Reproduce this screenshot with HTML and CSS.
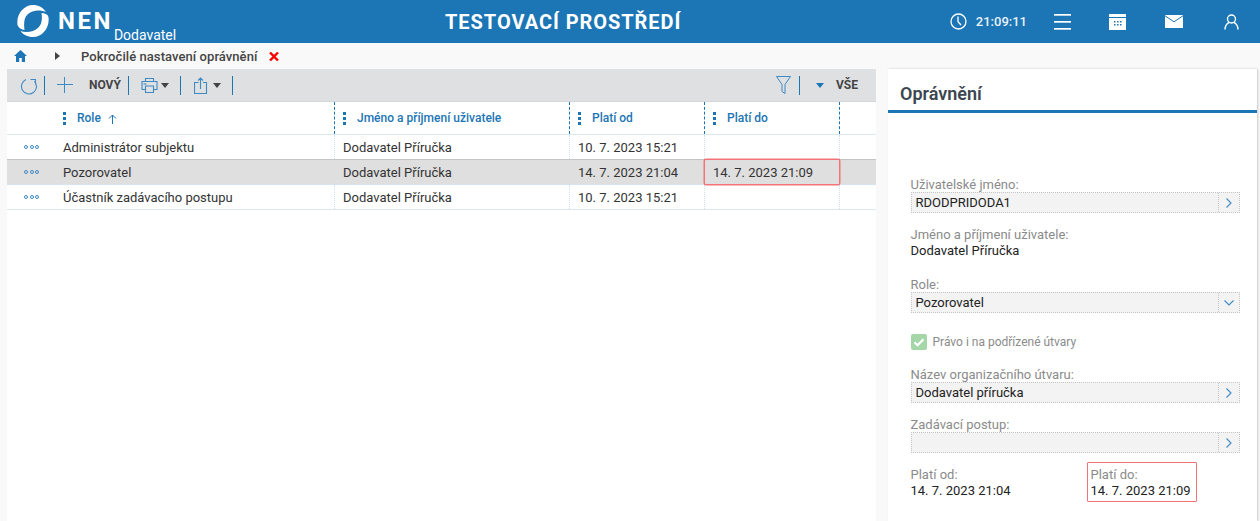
FILE: index.html
```html
<!DOCTYPE html>
<html lang="cs">
<head>
<meta charset="utf-8">
<title>NEN</title>
<link rel="stylesheet" href="styles.css">
</head>
<body>
<header class="topbar">
  <div class="brand">
    <svg class="logo" width="32" height="32" viewBox="0 0 32 32" fill="#fff"><path d="M.5 20C-1 9 7 0 16 0C21.500 0 26 2.500 29 7C23 4.500 15 5 10.500 9.500C7.500 12.500 6.500 17 7.500 25C4.500 24.500 1.500 23 .5 20Z"/><path d="M31.500 12C33 23 25 32 16 32C10.500 32 6 29.500 3.500 26C9 28 17 27 21.500 22.500C24.500 19.500 25.500 15 24.500 8C27.500 8 30.500 9 31.500 12Z"/></svg>
    <span class="nen">NEN</span>
    <span class="dod">Dodavatel</span>
  </div>
  <div class="envname">TESTOVACÍ PROSTŘEDÍ</div>
  <div class="tools">
    <svg class="clock" width="17" height="17" viewBox="0 0 17 17" fill="none" stroke="#fff" stroke-width="1.300"><circle cx="8.500" cy="8.500" r="7.500"/><path d="M8 3.500v5.200l3 3.300"/></svg>
    <span class="time">21:09:11</span>
    <svg class="t-menu" width="17" height="16" viewBox="0 0 17 16" fill="#fff"><rect y="0" width="17" height="1.700"/><rect y="7" width="17" height="1.700"/><rect y="14" width="17" height="1.700"/></svg>
    <svg class="t-cal" width="17" height="16" viewBox="0 0 17 16"><rect width="17" height="16" fill="#fff"/><rect y="3" width="17" height="1" fill="#1c75b5"/><g fill="#1c75b5"><rect x="5" y="7" width="1.500" height="1.500"/><rect x="8" y="7" width="1.500" height="1.500"/><rect x="11" y="7" width="1.500" height="1.500"/><rect x="5" y="10" width="1.500" height="1.500"/><rect x="8" y="10" width="1.500" height="1.500"/><rect x="11" y="10" width="1.500" height="1.500"/></g></svg>
    <svg class="t-mail" width="18" height="13" viewBox="0 0 18 13"><rect width="18" height="13" fill="#fff"/><path d="M0 .8l9 6 9-6" fill="none" stroke="#1c75b5" stroke-width="1"/></svg>
    <svg class="t-user" width="15" height="16" viewBox="0 0 15 16" fill="none" stroke="#fff" stroke-width="1.400"><circle cx="7.500" cy="5" r="4"/><path d="M1 15.500c0-4 2.500-6.500 4-7M14 15.500c0-4-2.500-6.500-4-7"/></svg>
  </div>
</header>
<nav class="crumbs">
  <svg class="home" width="13" height="12" viewBox="0 0 13 12" fill="#1c75b5"><path d="M6.500 0L0 6h2v6h3.200V8h2.600v4H11V6h2z"/></svg>
  <svg class="arrow" width="5" height="8" viewBox="0 0 5 8" fill="#444"><path d="M0 0l5 4-5 4z"/></svg>
  <span class="crumb">Pokročilé nastavení oprávnění</span>
  <svg class="close" width="10" height="9" viewBox="0 0 10 9" stroke="#f00" stroke-width="2.400"><path d="M1 .5l8 8M9 .5l-8 8"/></svg>
</nav>
<main class="content">
  <section class="list">
    <div class="toolbar">
      <svg class="ico-refresh" width="18" height="19" viewBox="0 0 18 19" fill="none" stroke="#3d8ac4" stroke-width="1.100"><path d="M6 3.600A7.500 7.500 0 1 0 14.500 5.400"/><path d="M10.500 3.500H15.500V8.500"/></svg>
      <i class="sep"></i>
      <svg class="ico-plus" width="16" height="16" viewBox="0 0 16 16" stroke="#3d8ac4" stroke-width="1"><path d="M7.500 0v16M0 7.500h16"/></svg>
      <span class="novy">NOVÝ</span>
      <i class="sep sep-n"></i>
      <svg class="ico-print" width="17" height="17" viewBox="0 0 17 17" fill="none" stroke="#3d8ac4" stroke-width="1.100"><path d="M4.500 4.500V1.500h8V4.500M4.500 12.500H1V4.500h15v8h-3.500"/><path d="M4.500 9h8v6.500h-8z"/><path d="M2.500 7h3"/></svg>
      <i class="caret"></i>
      <i class="sep sep-c"></i>
      <svg class="ico-share" width="14" height="17" viewBox="0 0 14 17" fill="none" stroke="#3d8ac4" stroke-width="1.100"><path d="M4.500 5.500H.5v11h12v-11H9M6.500 12V1M4 3.500L6.500 1 9 3.500"/></svg>
      <i class="caret caret-s"></i>
      <i class="sep sep-c"></i>
      <span class="spacer"></span>
      <svg class="ico-filter" width="15" height="18" viewBox="0 0 15 18" fill="none" stroke="#3d8ac4"><path d="M.5.500h14L9 8.500v9l-3-2v-7z"/></svg>
      <i class="sep sep-f"></i>
      <i class="caret caret-blue"></i>
      <span class="vse">VŠE</span>
    </div>
    <div class="grid head">
      <div class="hc c1"><i class="dots"></i><span>Role</span><svg class="up" width="9" height="10" viewBox="0 0 9 10" fill="none" stroke="#1c75b5"><path d="M4.500 10V1M1 4.500l3.500-3.500L8 4.500"/></svg></div>
      <div class="hc c2"><i class="dots"></i><span>Jméno a příjmení uživatele</span></div>
      <div class="hc c3"><i class="dots"></i><span>Platí od</span></div>
      <div class="hc c4"><i class="dots"></i><span>Platí do</span></div>
      <div class="hc c5"></div>
    </div>
    <div class="grid row">
      <div class="td c1"><i class="more"><b></b><b></b><b></b></i><span>Administrátor subjektu</span></div>
      <div class="td c2">Dodavatel Příručka</div>
      <div class="td c3">10. 7. 2023 15:21</div>
      <div class="td c4"></div>
      <div class="td c5"></div>
    </div>
    <div class="grid row selected">
      <div class="td c1"><i class="more"><b></b><b></b><b></b></i><span>Pozorovatel</span></div>
      <div class="td c2">Dodavatel Příručka</div>
      <div class="td c3">14. 7. 2023 21:04</div>
      <div class="td c4 marked">14. 7. 2023 21:09</div>
      <div class="td c5"></div>
    </div>
    <div class="grid row">
      <div class="td c1"><i class="more"><b></b><b></b><b></b></i><span>Účastník zadávacího postupu</span></div>
      <div class="td c2">Dodavatel Příručka</div>
      <div class="td c3">10. 7. 2023 15:21</div>
      <div class="td c4"></div>
      <div class="td c5"></div>
    </div>
  </section>
  <aside class="detail">
    <h2 class="title">Oprávnění</h2>
    <div class="form">
      <div class="field f-user">
        <label>Uživatelské jméno:</label>
        <div class="input"><span>RDODPRIDODA1</span><em><svg width="6" height="10" viewBox="0 0 6 10" fill="none" stroke="#3d8ac4" stroke-width="1.100"><path d="M.5.500L5 5 .5 9.500"/></svg></em></div>
      </div>
      <div class="field f-name">
        <label>Jméno a příjmení uživatele:</label>
        <div class="value">Dodavatel Příručka</div>
      </div>
      <div class="field f-role">
        <label>Role:</label>
        <div class="input"><span>Pozorovatel</span><em><svg width="10" height="6" viewBox="0 0 10 6" fill="none" stroke="#3d8ac4" stroke-width="1.100"><path d="M.5.500L5 5 9.500.500"/></svg></em></div>
      </div>
      <div class="check">
        <svg width="16" height="16" viewBox="0 0 16 16"><rect width="16" height="16" rx="2" fill="#a5d6a7"/><path d="M3.500 8.200l3 3 6-6" fill="none" stroke="#fff" stroke-width="2.200"/></svg>
        <span>Právo i na podřízené útvary</span>
      </div>
      <div class="field f-org">
        <label>Název organizačního útvaru:</label>
        <div class="input"><span>Dodavatel příručka</span><em><svg width="6" height="10" viewBox="0 0 6 10" fill="none" stroke="#3d8ac4" stroke-width="1.100"><path d="M.5.500L5 5 .5 9.500"/></svg></em></div>
      </div>
      <div class="field f-proc">
        <label>Zadávací postup:</label>
        <div class="input"><span></span><em><svg width="6" height="10" viewBox="0 0 6 10" fill="none" stroke="#3d8ac4" stroke-width="1.100"><path d="M.5.500L5 5 .5 9.500"/></svg></em></div>
      </div>
      <div class="dates">
        <div class="field d-from">
          <label>Platí od:</label>
          <div class="value">14. 7. 2023 21:04</div>
        </div>
        <div class="field d-to">
          <label>Platí do:</label>
          <div class="value">14. 7. 2023 21:09</div>
        </div>
      </div>
    </div>
  </aside>
</main>
</body>
</html>
```
FILE: styles.css
```css
* { box-sizing: border-box; }
html, body { margin: 0; height: 100%; overflow: hidden; }
body { background: #f9f9f9; font-family: Roboto, "Liberation Sans", sans-serif; font-size: 13px; color: #333; display: flex; flex-direction: column; }
i, em { font-style: normal; }

.topbar { height: 43px; flex: none; background: #1c75b5; color: #fff; display: grid; grid-template-columns: 445px auto 1fr; align-items: center; }
.brand { display: flex; align-items: flex-start; padding-left: 17px; height: 43px; }
.logo { margin-top: 5px; flex: none; }
.nen { font-size: 24px; font-weight: 700; letter-spacing: 2.500px; line-height: 24px; margin: 9px 0 0 9px; }
.dod { font-size: 14px; font-weight: 400; line-height: 16px; margin: 27px 0 0 1px; }
.envname { font-size: 20px; font-weight: 700; letter-spacing: .95px; }
.tools { display: flex; align-items: center; justify-content: flex-end; padding-right: 21px; }
.time { font-size: 13px; font-weight: 500; margin-left: 9px; color: #e8f1f8; }
.t-menu { margin-left: 27px; }
.t-cal { margin-left: 38px; }
.t-mail { margin-left: 39px; }
.t-user { margin-left: 41px; }

.crumbs { height: 26px; flex: none; display: flex; align-items: center; padding-left: 14px; }
.arrow { margin-left: 28px; }
.crumb { margin-left: 21px; font-weight: 500; font-size: 13px; color: #444; letter-spacing: .07px; }
.close { margin-left: 12px; }

.content { flex: 1; display: flex; padding-left: 7px; min-height: 0; }
.list { width: 869px; background: #fff; flex: none; }
.toolbar { height: 33px; background: #dfe0e2; display: flex; align-items: center; padding-left: 13px; padding-right: 18px; border-bottom: 1px solid #d5d6d8; }
.sep { width: 1px; height: 19px; background: #1c75b5; flex: none; margin-left: 6px; }
.sep-n { margin-left: 7px; }
.sep-c { margin-left: 11px; }
.ico-plus { margin-left: 12px; }
.novy { font-size: 12px; font-weight: 700; color: #444; margin-left: 16px; }
.ico-print { margin-left: 12px; }
.caret { width: 0; height: 0; border: 4px solid transparent; border-top: 5px solid #444; border-bottom: 0; margin-left: 3px; flex: none; }
.caret-s { margin-left: 5px; }
.ico-share { margin-left: 13px; }
.spacer { flex: 1; }
.sep-f { margin-left: 8px; }
.caret-blue { border-top-color: #1c75b5; margin-left: 16px; }
.vse { font-size: 12px; font-weight: 700; color: #444; margin-left: 12px; }

.grid { display: grid; grid-template-columns: 328px 235px 135px 135px 36px; }
.head { height: 33px; border-bottom: 1px solid #dbe8f2; }
.hc { display: flex; align-items: center; color: #1c75b5; font-size: 12px; font-weight: 500; border-right: 1px dashed #1c75b5; padding-left: 8px; }
.hc.c1 { padding-left: 56px; }
.hc.c5 { border-right: 0; }
.dots { width: 3px; height: 14px; flex: none; margin-right: 11px; background: radial-gradient(circle, #1c75b5 1.500px, transparent 1.700px) 0 0 / 3px 5px repeat-y; }
.up { margin-left: 7px; margin-top: 1px; }

.row { height: 25px; border-bottom: 1px solid #dbe8f2; }
.td { display: flex; align-items: center; padding-left: 8px; color: #333; border-right: 1px dotted #cfe2f0; font-size: 13px; }
.td.c5 { border-right: 0; }
.td.c1 { padding-left: 17px; }
.selected { background: #dfdfdf; border-top: 1px solid #c4c4c4; border-bottom-color: #d5e4ef; margin-top: -1px; height: 26px; }
.selected .td { border-right-color: #dfdfdf; }
.marked { box-shadow: 0 0 0 1.500px #f37277; position: relative; margin: 0 1px 0 0; padding-left: 8px; border-radius: 1px; }
.more { display: flex; gap: 1.500px; width: 39px; flex: none; }
.more b { width: 4px; height: 4px; border: 1px solid #3d8ac4; border-radius: 50%; }

.detail { width: 369px; flex: none; margin-left: 12px; background: #fff; box-shadow: 1px 0 2px rgba(0,0,0,.2); }
.title { margin: 0; height: 44px; padding: 14px 0 0 12px; font-size: 18px; line-height: 21px; color: #3c4650; border-bottom: 3px solid #1c75b5; font-weight: 600; }
.form { padding: 64px 17px 0 22.500px; }
.field label { display: block; color: #8b8b8b; font-size: 13px; line-height: 15px; }
.input { height: 21px; background: #f3f3f3; border: 1px dotted #c5c5c5; display: flex; justify-content: space-between; align-items: center; color: #222; padding-left: 4px; }
.input em { width: 21px; height: 19px; border-left: 1px dotted #c5c5c5; display: flex; align-items: center; justify-content: center; }
.value { color: #222; line-height: 16px; margin-top: 1px; }
.f-user { height: 42px; }
.f-name { margin-top: 8px; height: 43px; }
.f-role { margin-top: 7px; height: 38px; }
.check { display: flex; align-items: center; height: 16px; margin-top: 19px; }
.check span { color: #8b8b8b; font-size: 12px; margin-left: 6px; }
.f-org { margin-top: 17px; height: 38px; }
.f-proc { margin-top: 12px; height: 38px; }
.dates { display: grid; grid-template-columns: 180px 107px; margin-top: 7px; }
.d-from { padding-top: 5px; }
.d-to { border: 1.500px solid #f37277; border-radius: 1px; height: 40px; padding: 4px 0 0 3px; margin-left: -4px; width: 110px; }
```
